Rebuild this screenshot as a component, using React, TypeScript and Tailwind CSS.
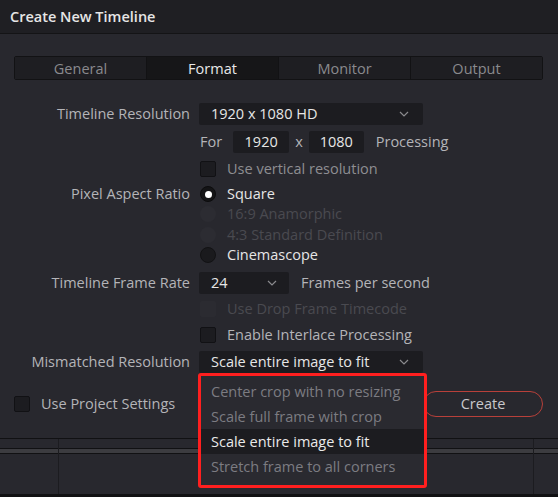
import React from "react";

const Chevron = ({ className = "" }: { className?: string }) => (
  <svg width="10" height="6" viewBox="0 0 10 6" className={className}>
    <path d="M1 1 L5 5 L9 1" fill="none" stroke="#8a8a8e" strokeWidth="1.2" />
  </svg>
);

const Checkbox = ({ disabled = false }: { disabled?: boolean }) => (
  <div
    className={
      disabled
        ? "w-[16px] h-[16px] rounded-[2px] bg-[#2b2b31] border border-[#2b2b31]"
        : "w-[16px] h-[16px] rounded-[2px] bg-[#1c1c20] border border-[#111114]"
    }
  />
);

const Radio = ({ state }: { state: "on" | "off" | "disabled" }) => {
  if (state === "on")
    return (
      <div className="w-[16px] h-[16px] rounded-full bg-[#141416] border border-[#0c0c0d] flex items-center justify-center">
        <div className="w-[7px] h-[7px] rounded-full bg-white" />
      </div>
    );
  if (state === "off")
    return <div className="w-[16px] h-[16px] rounded-full bg-[#1a1a1d] border border-[#121214]" />;
  return <div className="w-[16px] h-[16px] rounded-full bg-[#2c2c32]" />;
};

export default function App() {
  return (
    <div
      className="w-[558px] h-[497px] bg-[#28282e] relative overflow-hidden text-[14.5px]"
      style={{ fontFamily: '"Open Sans", "Noto Sans", sans-serif' }}
    >
      {/* Title bar */}
      <div className="h-[34px] bg-[#1f1f23] border-b border-[#141416] flex items-center pl-[10px]">
        <span className="text-[#e6e6e6] font-semibold text-[14.5px]">Create New Timeline</span>
      </div>

      {/* Tabs */}
      <div className="mt-[22px] mx-[14px] w-[529px] h-[24px] flex border border-[#121214] rounded-[2px] overflow-hidden">
        <div className="flex-1 bg-[#1e1e22] flex items-center justify-center pt-[1px] text-[#8a8a8e] border-r border-[#121214]">General</div>
        <div className="flex-1 bg-[#161618] flex items-center justify-center pt-[1px] text-[#e8e8e8] border-r border-[#121214]">Format</div>
        <div className="flex-1 bg-[#1e1e22] flex items-center justify-center pt-[1px] text-[#8a8a8e] border-r border-[#121214]">Monitor</div>
        <div className="flex-1 bg-[#1e1e22] flex items-center justify-center pt-[1px] text-[#8a8a8e]">Output</div>
      </div>

      {/* Form */}
      <div className="mt-[23px] flex flex-col">
        {/* Timeline Resolution */}
        <div className="flex items-center h-[22px]">
          <div className="w-[190px] text-right text-[#b4b4b8]">Timeline Resolution</div>
          <div className="ml-[9px] w-[224px] h-[22px] bg-[#1c1c20] rounded-[2px] flex items-center justify-between px-[12px] text-[#e6e6e6]">
            <span>1920 x 1080 HD</span>
            <Chevron className="mr-[2px]" />
          </div>
        </div>
        {/* For */}
        <div className="flex items-center h-[22px] mt-[6px]">
          <div className="w-[190px]" />
          <span className="ml-[10px] text-[#b4b4b8]">For</span>
          <div className="ml-[11px] w-[56px] h-[22px] bg-[#1c1c20] rounded-[2px] flex items-center justify-center text-[#e6e6e6]">1920</div>
          <span className="ml-[6px] text-[#b4b4b8]">x</span>
          <div className="ml-[6px] w-[55px] h-[22px] bg-[#1c1c20] rounded-[2px] flex items-center justify-center text-[#e6e6e6]">1080</div>
          <span className="ml-[12px] text-[#b4b4b8]">Processing</span>
        </div>
        {/* Use vertical */}
        <div className="flex items-center h-[22px] mt-[5px]">
          <div className="w-[190px]" />
          <div className="ml-[10px]"><Checkbox /></div>
          <span className="ml-[11px] text-[#8e8e92]">Use vertical resolution</span>
        </div>
        {/* Pixel aspect */}
        <div className="flex items-center h-[20px] mt-[4px]">
          <div className="w-[190px] text-right text-[#b4b4b8]">Pixel Aspect Ratio</div>
          <div className="ml-[10px]"><Radio state="on" /></div>
          <span className="ml-[11px] text-[#e6e6e6]">Square</span>
        </div>
        <div className="flex items-center h-[20px] mt-[0px]">
          <div className="w-[190px]" />
          <div className="ml-[10px]"><Radio state="disabled" /></div>
          <span className="ml-[11px] text-[#4a4a50]">16:9 Anamorphic</span>
        </div>
        <div className="flex items-center h-[20px] mt-[1px]">
          <div className="w-[190px]" />
          <div className="ml-[10px]"><Radio state="disabled" /></div>
          <span className="ml-[11px] text-[#4a4a50]">4:3 Standard Definition</span>
        </div>
        <div className="flex items-center h-[20px] mt-[0px]">
          <div className="w-[190px]" />
          <div className="ml-[10px]"><Radio state="off" /></div>
          <span className="ml-[11px] text-[#e6e6e6]">Cinemascope</span>
        </div>
        {/* Frame rate */}
        <div className="flex items-center h-[22px] mt-[7px]">
          <div className="w-[190px] text-right text-[#b4b4b8]">Timeline Frame Rate</div>
          <div className="ml-[9px] w-[90px] h-[22px] bg-[#1c1c20] rounded-[2px] flex items-center justify-between px-[12px] text-[#e6e6e6]">
            <span>24</span>
            <Chevron />
          </div>
          <span className="ml-[12px] text-[#b4b4b8]">Frames per second</span>
        </div>
        <div className="flex items-center h-[22px] mt-[4px]">
          <div className="w-[190px]" />
          <div className="ml-[10px]"><Checkbox disabled /></div>
          <span className="ml-[11px] text-[#4a4a50]">Use Drop Frame Timecode</span>
        </div>
        <div className="flex items-center h-[22px] mt-[4px]">
          <div className="w-[190px]" />
          <div className="ml-[10px]"><Checkbox /></div>
          <span className="ml-[11px] text-[#b4b4b8]">Enable Interlace Processing</span>
        </div>
        {/* Mismatched */}
        <div className="flex items-center h-[22px] mt-[5px]">
          <div className="w-[190px] text-right text-[#b4b4b8]">Mismatched Resolution</div>
          <div className="ml-[9px] w-[224px] h-[22px] bg-[#1c1c20] rounded-[2px] flex items-center justify-between px-[12px] text-[#e6e6e6]">
            <span>Scale entire image to fit</span>
            <Chevron className="mr-[2px]" />
          </div>
        </div>
        {/* Bottom row */}
        <div className="flex items-center h-[26px] mt-[18px]">
          <div className="ml-[14px]"><Checkbox /></div>
          <span className="ml-[11px] text-[#b4b4b8]">Use Project Settings</span>
          <div className="ml-auto mr-[15px] w-[120px] h-[26px] rounded-full border border-[#b8403a] flex items-center justify-center text-[#c8c8cc]">
            Create
          </div>
        </div>
      </div>

      {/* Background below dialog */}
      <div className="absolute left-0 right-0 top-[438px] bottom-0 bg-[#28282e]">
        <div className="h-[1px] bg-[#111113]" />
        <div className="h-[9px]" />
        <div className="h-[1px] bg-[#111113]" />
        <div className="h-[4px] bg-[#3c3c40]" />
        <div className="h-[1px] bg-[#111113]" />
        <div className="absolute left-[58px] top-[1px] bottom-[3px] w-[1px] bg-[#1c1c20]" />
        <div className="absolute left-[533px] top-[1px] bottom-[3px] w-[1px] bg-[#1c1c20]" />
        <div className="absolute left-0 right-0 bottom-0 h-[3px] bg-[#111113]" />
      </div>

      {/* Dropdown menu */}
      <div className="absolute left-[198px] top-[373px] w-[229px] h-[115px] border-[3px] border-[#ff1f1f] rounded-[3px] bg-[#2a2a30] pt-[3px]">
        <div className="h-[25px] flex items-center pl-[10px] text-[#7c7c82]">Center crop with no resizing</div>
        <div className="h-[25px] flex items-center pl-[10px] text-[#7c7c82]">Scale full frame with crop</div>
        <div className="h-[25px] flex items-center pl-[10px] text-[#eaeaea] bg-[#1c1c20]">Scale entire image to fit</div>
        <div className="h-[25px] flex items-center pl-[10px] text-[#7c7c82]">Stretch frame to all corners</div>
      </div>
    </div>
  );
}
